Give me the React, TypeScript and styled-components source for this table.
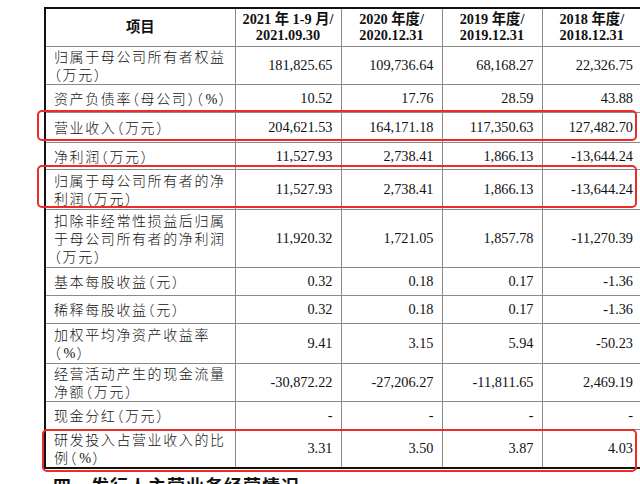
import React from "react";
import styled, { createGlobalStyle } from "styled-components";

const Global = createGlobalStyle`
  html, body {
    margin: 0;
    padding: 0;
    background: #ffffff;
    overflow: hidden;
  }
`;

const Page = styled.div`
  position: relative;
  width: 640px;
  height: 484px;
  overflow: hidden;
  padding: 7px 0 0 44px;
  box-sizing: border-box;
`;

const Table = styled.table`
  border-collapse: collapse;
  table-layout: fixed;
  width: 599px;
  border: 2px solid #111;
  font-family: "Liberation Serif", "Noto Sans CJK SC", serif;
  color: #111;
`;

const Row = styled.tr<{ $h: number }>`
  height: ${(p) => p.$h}px;
`;

const HeadCell = styled.th`
  border: 1px solid #8a8a8a;
  font-size: 14.3px;
  font-weight: bold;
  line-height: 16px;
  text-align: center;
  vertical-align: middle;
  padding: 0 2px;
  white-space: nowrap;
  &:last-child {
    padding-right: 4px;
  }
`;

const LabelCell = styled.td`
  border: 1px solid #8a8a8a;
  font-family: "Noto Sans CJK SC", "Liberation Serif", sans-serif;
  font-size: 14px;
  font-weight: 300;
  line-height: 18px;
  letter-spacing: 1.6px;
  font-feature-settings: "halt";
  padding: 0 2px 0 8px;
  white-space: nowrap;
  vertical-align: middle;
  text-align: left;
`;

const Pct = styled.span`
  font-family: "Liberation Serif", serif;
  font-size: 14.3px;
  line-height: 0;
  letter-spacing: 0;
  padding: 0 1px;
`;

const NumCell = styled.td`
  border: 1px solid #8a8a8a;
  font-size: 14.3px;
  line-height: 18px;
  text-align: right;
  vertical-align: middle;
  padding: 0 8px 0 2px;
  white-space: nowrap;
  &:last-child {
    padding-right: 10px;
  }
`;

const Highlight = styled.div<{ $x: number; $y: number; $w: number; $h: number }>`
  position: absolute;
  left: ${(p) => p.$x}px;
  top: ${(p) => p.$y}px;
  width: ${(p) => p.$w}px;
  height: ${(p) => p.$h}px;
  box-sizing: border-box;
  border: 2px solid #ee2b24;
  border-radius: 5px;
  pointer-events: none;
`;

const Heading = styled.div`
  margin: 7px 0 0 9px;
  font-family: "Noto Sans CJK SC", sans-serif;
  font-size: 18px;
  font-weight: bold;
  line-height: 18px;
  letter-spacing: 1px;
  color: #111;
  white-space: nowrap;
`;

type RowData = { label: string[]; values: string[]; h: number };

const rows: RowData[] = [
  { label: ["归属于母公司所有者权益", "（万元）"], values: ["181,825.65", "109,736.64", "68,168.27", "22,326.75"], h: 38 },
  { label: ["资产负债率（母公司）（%）"], values: ["10.52", "17.76", "28.59", "43.88"], h: 28 },
  { label: ["营业收入（万元）"], values: ["204,621.53", "164,171.18", "117,350.63", "127,482.70"], h: 30 },
  { label: ["净利润（万元）"], values: ["11,527.93", "2,738.41", "1,866.13", "-13,644.24"], h: 27 },
  { label: ["归属于母公司所有者的净", "利润（万元）"], values: ["11,527.93", "2,738.41", "1,866.13", "-13,644.24"], h: 40 },
  { label: ["扣除非经常性损益后归属", "于母公司所有者的净利润", "（万元）"], values: ["11,920.32", "1,721.05", "1,857.78", "-11,270.39"], h: 58 },
  { label: ["基本每股收益（元）"], values: ["0.32", "0.18", "0.17", "-1.36"], h: 28 },
  { label: ["稀释每股收益（元）"], values: ["0.32", "0.18", "0.17", "-1.36"], h: 28 },
  { label: ["加权平均净资产收益率", "（%）"], values: ["9.41", "3.15", "5.94", "-50.23"], h: 40 },
  { label: ["经营活动产生的现金流量", "净额（万元）"], values: ["-30,872.22", "-27,206.27", "-11,811.65", "2,469.19"], h: 38 },
  { label: ["现金分红（万元）"], values: ["-", "-", "-", "-"], h: 28 },
  { label: ["研发投入占营业收入的比", "例（%）"], values: ["3.31", "3.50", "3.87", "4.03"], h: 39 },
];

const renderLine = (line: string) => {
  const parts = line.split("%");
  return parts.map((p, i) => (
    <React.Fragment key={i}>
      {p}
      {i < parts.length - 1 && <Pct>%</Pct>}
    </React.Fragment>
  ));
};

const headers = [
  ["2021 年 1-9 月/", "2021.09.30"],
  ["2020 年度/", "2020.12.31"],
  ["2019 年度/", "2019.12.31"],
  ["2018 年度/", "2018.12.31"],
];

export default function App() {
  return (
    <>
      <Global />
      <Page>
        <Table>
          <colgroup>
            <col style={{ width: 190 }} />
            <col style={{ width: 106 }} />
            <col style={{ width: 101 }} />
            <col style={{ width: 100 }} />
            <col style={{ width: 102 }} />
          </colgroup>
          <thead>
            <Row $h={38}>
              <HeadCell>项目</HeadCell>
              {headers.map((h, i) => (
                <HeadCell key={i}>
                  {h[0]}
                  <br />
                  {h[1]}
                </HeadCell>
              ))}
            </Row>
          </thead>
          <tbody>
            {rows.map((r, i) => (
              <Row key={i} $h={r.h}>
                <LabelCell>
                  {r.label.map((l, j) => (
                    <React.Fragment key={j}>
                      {j > 0 && <br />}
                      {renderLine(l)}
                    </React.Fragment>
                  ))}
                </LabelCell>
                {r.values.map((v, j) => (
                  <NumCell key={j}>{v}</NumCell>
                ))}
              </Row>
            ))}
          </tbody>
        </Table>
        <Heading>四、发行人主营业务经营情况</Heading>
        <Highlight $x={37} $y={110} $w={600} $h={31} />
        <Highlight $x={37} $y={165} $w={600} $h={43} />
        <Highlight $x={42} $y={429} $w={595} $h={43} />
      </Page>
    </>
  );
}
